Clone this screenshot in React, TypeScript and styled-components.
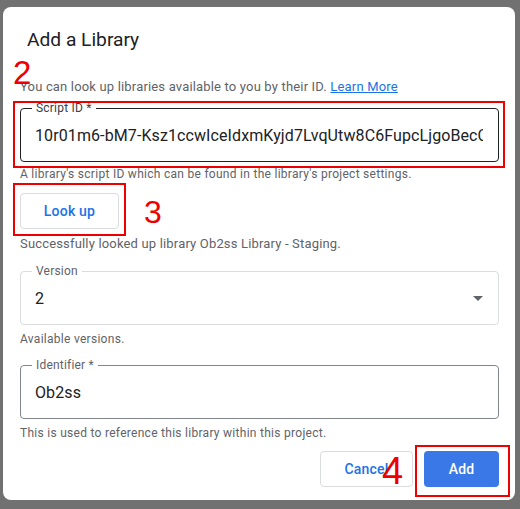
import React from "react";
import styled, { createGlobalStyle } from "styled-components";

const Global = createGlobalStyle`
  html, body { margin: 0; padding: 0; background: #717171; }
  body { font-family: Roboto, "Liberation Sans", Arial, sans-serif; }
  * { box-sizing: border-box; }
`;

const Page = styled.div`
  width: 520px;
  height: 509px;
  padding: 7px 5px 9px 3px;
  background: #717171;
  position: relative;
`;

const Dialog = styled.div`
  width: 512px;
  height: 493px;
  background: #fff;
  border-radius: 8px;
  padding: 21px 16px 13px 17px;
  display: flex;
  flex-direction: column;
`;

const Title = styled.h2`
  margin: 0 0 0 7px;
  font-size: 19.2px;
  line-height: 24px;
  font-weight: 400;
  color: #202124;
`;

const Intro = styled.p`
  margin: 25px 0 0;
  font-size: 13px;
  line-height: 20px;
  letter-spacing: 0.17px;
  color: #5f6368;
`;

const Link = styled.a`
  color: #1a73e8;
  text-decoration: underline;
`;

const Field = styled.div<{ $border: string; $mt: number }>`
  position: relative;
  margin-top: ${(p) => p.$mt}px;
  height: 54px;
  border: 1px solid ${(p) => p.$border};
  border-radius: 4px;
  padding: 0 15px 0 14px;
  display: flex;
  align-items: center;
  font-size: 16px;
  letter-spacing: 0.1px;
  color: #202124;
`;

const FieldLabel = styled.span<{ $dark?: boolean }>`
  position: absolute;
  top: -8px;
  left: 11px;
  padding: 0 4px;
  background: #fff;
  font-size: 12px;
  line-height: 14px;
  letter-spacing: 0.2px;
  color: ${(p) => (p.$dark ? "#3c4043" : "#5f6368")};
`;

const Value = styled.span`
  flex: 1;
  overflow: hidden;
  white-space: nowrap;
`;

const Arrow = styled.span`
  width: 0;
  height: 0;
  border-left: 5px solid transparent;
  border-right: 5px solid transparent;
  border-top: 5px solid #5f6368;
`;

const Helper = styled.div<{ $mt?: number }>`
  margin-top: ${(p) => p.$mt ?? 5}px;
  font-size: 12px;
  line-height: 16px;
  letter-spacing: 0.28px;
  color: #5f6368;
`;

const Status = styled.div`
  margin-top: 5px;
  font-size: 13px;
  line-height: 20px;
  letter-spacing: 0.17px;
  color: #5f6368;
`;

const OutlineButton = styled.button<{ $w: number }>`
  width: ${(p) => p.$w}px;
  height: 36px;
  border: 1px solid #dadce0;
  border-radius: 4px;
  background: #fff;
  color: #1a73e8;
  font-family: Roboto, "Liberation Sans", sans-serif;
  font-size: 14px;
  font-weight: 500;
  letter-spacing: 0.2px;
  padding: 0;
`;

const LookRow = styled.div`
  margin-top: 11px;
  display: flex;
`;

const Actions = styled.div`
  margin-top: 10px;
  display: flex;
  justify-content: flex-end;
  gap: 11px;
`;

const PrimaryButton = styled.button`
  width: 75px;
  height: 36px;
  border: none;
  border-radius: 4px;
  background: #3b78e7;
  color: #fff;
  font-family: Roboto, "Liberation Sans", sans-serif;
  font-size: 14px;
  font-weight: 500;
  letter-spacing: 0.2px;
  padding: 0;
`;

const RedBox = styled.div`
  position: absolute;
  border: 2px solid #ee0000;
  pointer-events: none;
`;

const Mark = styled.span<{ $size: number }>`
  position: absolute;
  font-family: "Liberation Sans", Arial, sans-serif;
  font-size: ${(p) => p.$size}px;
  line-height: ${(p) => p.$size}px;
  color: #ee0000;
`;

export default function App() {
  return (
    <>
      <Global />
      <Page>
        <Dialog>
          <Title>Add a Library</Title>
          <Intro>
            You can look up libraries available to you by their ID. <Link>Learn More</Link>
          </Intro>
          <Field $border="#202124" $mt={11}>
            <FieldLabel $dark>Script ID *</FieldLabel>
            <Value>10r01m6-bM7-Ksz1ccwIceIdxmKyjd7LvqUtw8C6FupcLjgoBecC1Dp3tFh</Value>
          </Field>
          <Helper $mt={4}>A library's script ID which can be found in the library's project settings.</Helper>
          <LookRow>
            <OutlineButton $w={99}>Look up</OutlineButton>
          </LookRow>
          <Status>Successfully looked up library Ob2ss Library - Staging.</Status>
          <Field $border="#dadce0" $mt={17}>
            <FieldLabel>Version</FieldLabel>
            <Value>2</Value>
            <Arrow />
          </Field>
          <Helper $mt={6}>Available versions.</Helper>
          <Field $border="#80868b" $mt={18}>
            <FieldLabel>Identifier *</FieldLabel>
            <Value>Ob2ss</Value>
          </Field>
          <Helper $mt={6}>This is used to reference this library within this project.</Helper>
          <Actions>
            <OutlineButton $w={93}>Cancel</OutlineButton>
            <PrimaryButton>Add</PrimaryButton>
          </Actions>
        </Dialog>
        <RedBox style={{ left: 13, top: 101, width: 492, height: 67 }} />
        <RedBox style={{ left: 13, top: 183, width: 113, height: 53 }} />
        <RedBox style={{ left: 415, top: 445, width: 95, height: 52 }} />
        <Mark $size={33} style={{ left: 13, top: 56 }}>2</Mark>
        <Mark $size={32} style={{ left: 144, top: 196 }}>3</Mark>
        <Mark $size={38} style={{ left: 382, top: 452 }}>4</Mark>
      </Page>
    </>
  );
}
